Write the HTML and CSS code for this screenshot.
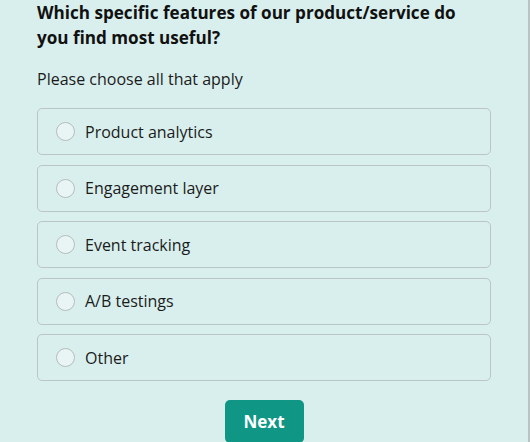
FILE: index.html
```html
<!DOCTYPE html>
<html>
<head>
<meta charset="utf-8">
<link rel="stylesheet" href="styles.css">
</head>
<body>
<div class="page">
  <div class="survey">
    <h1 class="question">Which specific features of our product/service do you find most useful?</h1>
    <p class="hint">Please choose all that apply</p>
    <div class="options">
      <label class="option"><span class="radio"></span><span class="label">Product analytics</span></label>
      <label class="option"><span class="radio"></span><span class="label">Engagement layer</span></label>
      <label class="option"><span class="radio"></span><span class="label">Event tracking</span></label>
      <label class="option"><span class="radio"></span><span class="label">A/B testings</span></label>
      <label class="option"><span class="radio"></span><span class="label">Other</span></label>
    </div>
    <div class="actions">
      <button class="next">Next</button>
    </div>
  </div>
</div>
</body>
</html>
```
FILE: styles.css
```css
html, body {
  margin: 0;
  padding: 0;
  height: 100%;
  overflow: hidden;
}
body {
  background: #d9efed;
  font-family: "Open Sans", "Liberation Sans", sans-serif;
  color: #1b1b1b;
}
.page {
  height: 100%;
  border-right: 2px solid #b9c3c3;
  box-sizing: border-box;
}
.survey {
  width: 454px;
  padding: 0 0 0 37px;
}
.question {
  margin: 0;
  padding-top: 0;
  font-size: 17.1px;
  line-height: 25px;
  font-weight: 700;
  color: #111;
}
.hint {
  margin: 18px 0 0 0;
  font-size: 16px;
  line-height: 22px;
}
.options {
  margin-top: 18px;
  display: flex;
  flex-direction: column;
  gap: 9.5px;
}
.option {
  display: flex;
  align-items: center;
  height: 47px;
  box-sizing: border-box;
  border: 1.5px solid #bcc5c5;
  border-radius: 5px;
  padding-left: 18px;
}
.radio {
  width: 19px;
  height: 19px;
  box-sizing: border-box;
  border: 1.5px solid #b5bdbd;
  border-radius: 50%;
  background: #e8f5f4;
}
.label {
  margin-left: 10px;
  font-size: 16px;
}
.actions {
  display: flex;
  justify-content: center;
  margin-top: 19px;
}
.next {
  width: 79px;
  height: 43px;
  border: none;
  border-radius: 5px;
  background: #0f9684;
  color: #fff;
  font-family: "Open Sans", "Liberation Sans", sans-serif;
  font-weight: 700;
  font-size: 17px;
  padding: 0;
}
```
